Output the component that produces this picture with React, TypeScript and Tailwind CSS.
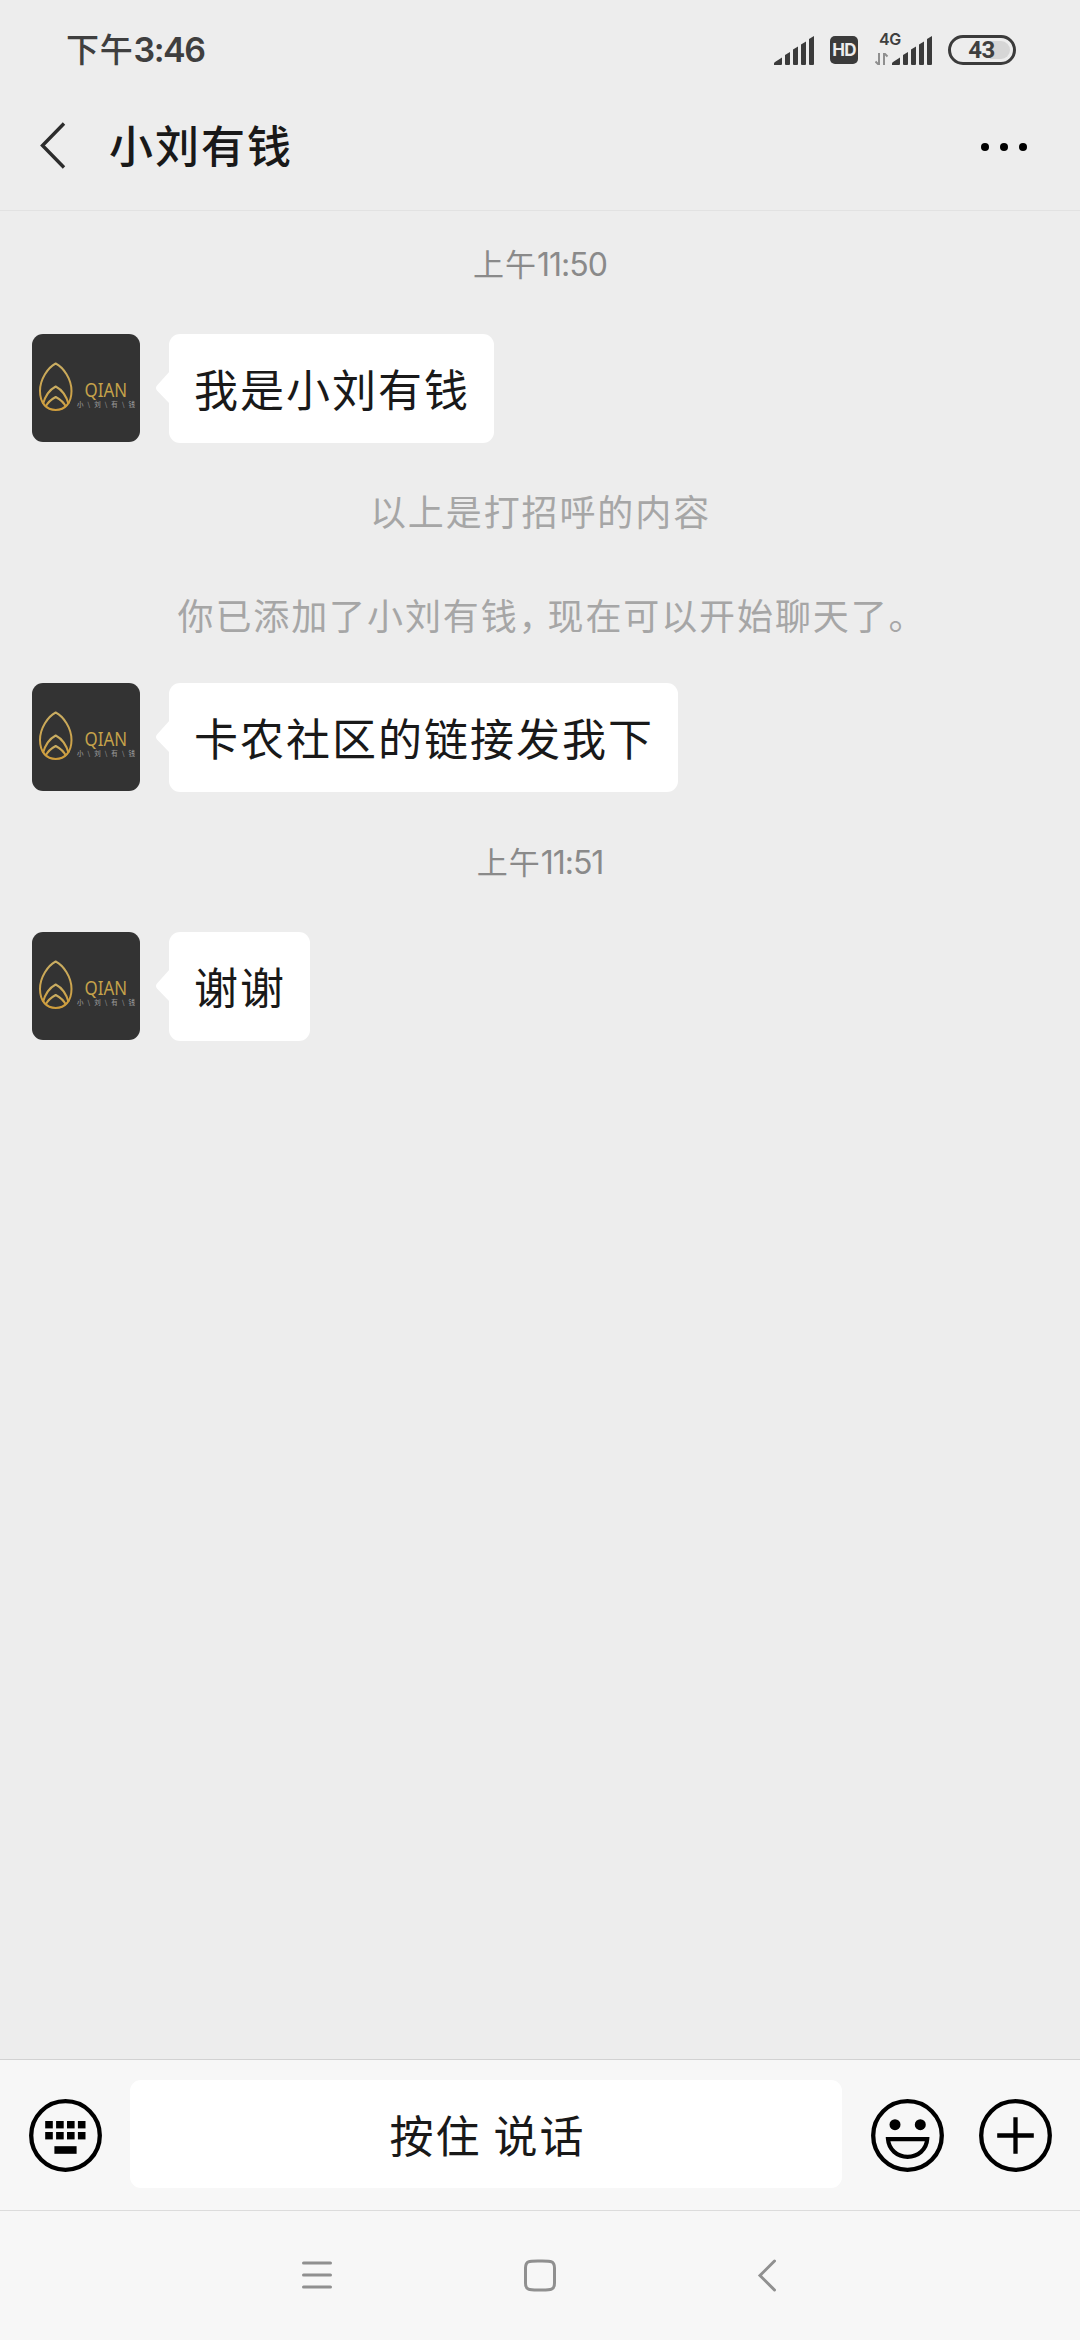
import clsx from 'clsx'

type Entry =
    | { kind: 'time'; prefix: string; clock: string; className: string }
    | { kind: 'notice'; parts: string[]; className: string }
    | { kind: 'message'; text: string; className: string }

const entries: Entry[] = [
    { kind: 'time', prefix: '上午', clock: '11:50', className: '' },
    { kind: 'message', text: '我是小刘有钱', className: 'mt-[47px]' },
    { kind: 'notice', parts: ['以上是打招呼的内容'], className: 'mt-[47px] pl-px' },
    { kind: 'notice', parts: ['你已添加了小刘有钱', '现在可以开始聊天了。'], className: 'mt-[60px] pl-[24px]' },
    { kind: 'message', text: '卡农社区的链接发我下', className: 'mt-[45px]' },
    { kind: 'time', prefix: '上午', clock: '11:51', className: 'mt-[49px]' },
    { kind: 'message', text: '谢谢', className: 'mt-[47px]' },
]

function SignalBars() {
    return (
        <svg width="40" height="29" viewBox="0 0 40 29" fill="#3b3b3b">
            <path d="M0 29V27.5Q0 26.5 1 26L8 21.5V28Q8 29 7 29Z" />
            <path d="M11 28V19L16 16V28Q16 29 15 29H12Q11 29 11 28Z" />
            <path d="M19 28V13.5L24 10.5V28Q24 29 23 29H20Q19 29 19 28Z" />
            <path d="M27 28V8.5L32 5.5V28Q32 29 31 29H28Q27 29 27 28Z" />
            <path d="M35 28V3L40 0V28Q40 29 39 29H36Q35 29 35 28Z" />
        </svg>
    )
}

function StatusBar() {
    return (
        <div className="flex h-[82px] items-center justify-between pt-[18px] pr-16 pl-[66px] text-[#3f3f3f]">
            <div className="flex items-center leading-none font-medium">
                <span className="pb-1 text-[33px] tracking-[0.7px]">下午</span>
                <span className="font-[Inter] text-[34px] font-semibold tracking-[-1.4px]">3:46</span>
            </div>
            <div className="flex h-[32px] items-center">
                <SignalBars />
                <div className="ml-4 flex size-7 items-center justify-center rounded-[5px] bg-[#3b3b3b] font-[Inter] text-[17px] leading-none font-bold tracking-[-0.8px] text-[#ededed]">
                    HD
                </div>
                <div className="relative ml-[34px] h-[29px]">
                    <SignalBars />
                    <span className="absolute -top-[7px] -left-[13px] font-[Inter] text-[16px] leading-[20px] font-semibold tracking-[-0.4px]">
                        4G
                    </span>
                    <svg className="absolute top-[17px] -left-[17px]" width="14" height="12" viewBox="0 0 14 12" fill="none" stroke="#8f8f8f" strokeWidth="2">
                        <path d="M4 0V12L0.5 8.5" />
                        <path d="M9 12V0L12.5 3.5" />
                    </svg>
                </div>
                <div className="relative ml-4 flex h-[30px] w-[68px] items-center justify-center rounded-full border-[3px] border-[#3b3b3b]">
                    <div className="absolute top-[3px] right-[3px] h-[18px] w-5 rounded-r-full bg-[#d6d6d6]" />
                    <span className="relative pr-px font-[Roboto] text-[24px] leading-none font-bold tracking-[-0.6px]">43</span>
                </div>
            </div>
        </div>
    )
}

function Header() {
    return (
        <header className="flex h-[129px] items-center border-b border-[#e2e2e2] pr-[53px] pl-[39px]">
            <svg width="28" height="48" viewBox="0 0 28 48" fill="none" stroke="#2c2c2c" strokeWidth="3.4">
                <path d="M25 1.5L3.5 23.5L25 45.5" />
            </svg>
            <h1 className="ml-[42px] flex-1 pb-1 text-[44px] leading-none font-medium tracking-[2px] text-[#191919]">小刘有钱</h1>
            <div className="mt-[2px] flex gap-[11px]">
                <i className="size-2 rounded-full bg-black" />
                <i className="size-2 rounded-full bg-black" />
                <i className="size-2 rounded-full bg-black" />
            </div>
        </header>
    )
}

function Avatar() {
    return (
        <svg className="shrink-0 rounded-[11px] bg-[#333333]" width="108" height="108" viewBox="0 0 108 108">
            <defs>
                <linearGradient id="gold" x1="0" y1="0" x2="0" y2="1">
                    <stop offset="0" stopColor="#c9ad62" />
                    <stop offset="1" stopColor="#cf9d3c" />
                </linearGradient>
            </defs>
            <g fill="none" stroke="url(#gold)" strokeWidth="2" strokeLinejoin="round">
                <path d="M23.7 29.5C16 33.5 8 45 8 57C8 69 14.5 76 23.7 76C33 76 39.5 69 39.5 57C39.5 45 31.5 33.5 23.7 29.5Z" />
                <path d="M11 70C13.5 61 18 55.5 23.7 52.5C29.5 55.5 34 61 36.5 70" />
                <path d="M13.5 73C15.5 68.5 19 65.5 23.7 63C28.5 65.5 32 68.5 34 73" />
            </g>
            <text x="52.5" y="62.5" fill="#c5a24a" fontSize="19.5" textLength="42.5" lengthAdjust="spacingAndGlyphs" className="font-['Noto_Sans']">
                QIAN
            </text>
            <text x="45" y="73" fill="#949494" fontSize="6.5" textLength="58" className="font-medium">
                小 \ 刘 \ 有 \ 钱
            </text>
        </svg>
    )
}

function Message({ text, className }: { text: string; className: string }) {
    return (
        <div className={clsx('flex h-[109px] items-start pl-8', className)}>
            <Avatar />
            <div className="relative ml-[29px] flex h-[109px] items-center rounded-[11px] bg-white pr-6 pb-px pl-[25px]">
                <svg className="absolute top-[37px] -left-[14px]" width="15" height="34" viewBox="0 0 15 34" fill="#fff">
                    <path d="M15 0L2 14.5Q0 17 2 19.5L15 33Z" />
                </svg>
                <p className="text-[44px] leading-none tracking-[2px] whitespace-nowrap text-[#191919]">{text}</p>
            </div>
        </div>
    )
}

function Notice({ parts, className }: { parts: string[]; className: string }) {
    return (
        <p className={clsx('flex h-11 items-center justify-center pb-[5px] text-[36px] leading-none tracking-[1.9px] text-[#a6a6a6]', className)}>
            {parts.map((part, i) => (
                <span key={part}>
                    {/* half-width comma, full-width punctuation leaves too big a gap */}
                    {i > 0 && <span className="mr-[9px] [font-feature-settings:'halt']">，</span>}
                    {part}
                </span>
            ))}
        </p>
    )
}

function TimeLabel({ prefix, clock, className }: { prefix: string; clock: string; className: string }) {
    return (
        <div className={clsx('flex h-11 items-center justify-center leading-none text-[#8a8a8a]', className)}>
            <span className="pb-[5px] text-[31px] tracking-[1px]">{prefix}</span>
            <span className="font-[Inter] text-[32px] tracking-[-1px]">{clock}</span>
        </div>
    )
}

const keyColumns = [16.2, 27.1, 38, 48.9]

function InputBar() {
    return (
        <div className="flex h-[151px] items-center border-t border-[#d2d2d2] pr-7 pl-[29px]">
            <svg width="73" height="73" viewBox="0 0 73 73">
                <circle cx="36.5" cy="36.5" r="34.3" fill="none" stroke="#000" strokeWidth="4.3" />
                {keyColumns.map((x) => (
                    <g key={x}>
                        <rect x={x} y="22" width="7.6" height="7.4" />
                        <rect x={x} y="33" width="7.6" height="7.4" />
                    </g>
                ))}
                <rect x="25.4" y="47.2" width="22.2" height="7.6" />
            </svg>
            <button className="-mt-[3px] ml-7 h-[108px] w-[712px] rounded-[11px] bg-white pl-[3px] text-[44px] leading-none tracking-[2px] text-[#191919]">
                按住 说话
            </button>
            <svg className="ml-[29px]" width="73" height="73" viewBox="0 0 73 73">
                <circle cx="36.5" cy="36.5" r="34.3" fill="none" stroke="#000" strokeWidth="4.3" />
                <circle cx="24" cy="25.7" r="5.5" />
                <circle cx="49.3" cy="25.7" r="5.5" />
                <path d="M17 40.2H56.2C55.5 50.5 47 57.8 36.6 57.8C26.2 57.8 17.7 50.5 17 40.2Z" fill="none" stroke="#000" strokeWidth="4.2" />
            </svg>
            <svg className="ml-[35px]" width="73" height="73" viewBox="0 0 73 73" fill="none" stroke="#000" strokeWidth="4.3">
                <circle cx="36.5" cy="36.5" r="34.3" />
                <path d="M36.5 18.2V54.8M18.2 36.5H54.8" />
            </svg>
        </div>
    )
}

function NavigationBar() {
    return (
        <nav className="flex h-[130px] items-center border-t border-[#dcdcdc] pl-[301px]">
            <svg width="32" height="34" viewBox="0 0 32 34" fill="none" stroke="#909090" strokeWidth="3" strokeLinecap="round">
                <path d="M2.5 4H29.5M2.5 16H29.5M2.5 28H29.5" />
            </svg>
            <svg className="ml-[190px]" width="34" height="34" viewBox="0 0 34 34" fill="none" stroke="#909090" strokeWidth="3">
                <path d="M17 2C27.5 2 31.5 1.5 31.5 9V24C31.5 31.5 27.5 31 17 31C6.5 31 2.5 31.5 2.5 24V9C2.5 1.5 6.5 2 17 2Z" />
            </svg>
            <svg className="ml-[200px]" width="20" height="34" viewBox="0 0 20 34" fill="none" stroke="#909090" strokeWidth="3" strokeLinecap="round">
                <path d="M17.5 2L3 16.5L17.5 31" />
            </svg>
        </nav>
    )
}

export default function App() {
    return (
        <div className="flex h-[2340px] w-[1080px] flex-col overflow-hidden bg-[#ededed] font-['Noto_Sans_CJK_SC',sans-serif]">
            <StatusBar />
            <Header />
            <main className="flex-1 pt-8">
                {entries.map((entry, i) => {
                    if (entry.kind === 'time') return <TimeLabel key={i} {...entry} />
                    if (entry.kind === 'notice') return <Notice key={i} {...entry} />
                    return <Message key={i} {...entry} />
                })}
            </main>
            <footer className="bg-[#f7f7f7]">
                <InputBar />
                <NavigationBar />
            </footer>
        </div>
    )
}
